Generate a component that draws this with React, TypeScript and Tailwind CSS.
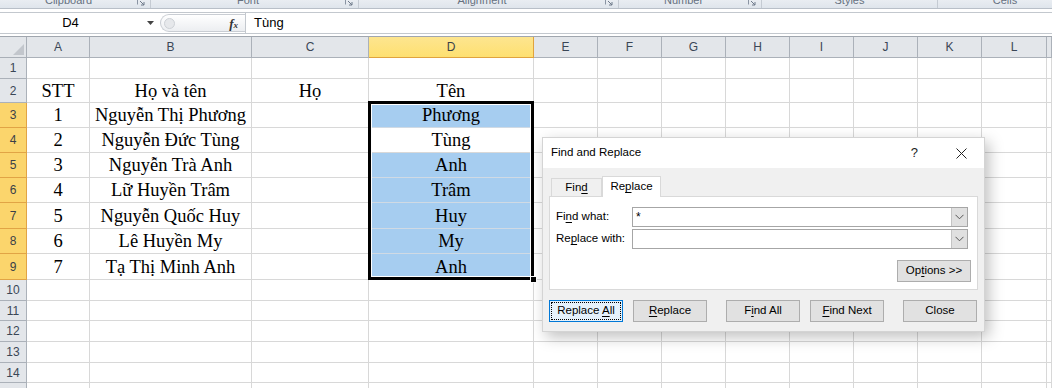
import React from "react";

const rows: Record<number, string[]> = {
  2: ["STT", "Họ và tên", "Họ", "Tên"],
  3: ["1", "Nguyễn Thị Phương", "", "Phương"],
  4: ["2", "Nguyễn Đức Tùng", "", "Tùng"],
  5: ["3", "Nguyễn Trà Anh", "", "Anh"],
  6: ["4", "Lữ Huyền Trâm", "", "Trâm"],
  7: ["5", "Nguyễn Quốc Huy", "", "Huy"],
  8: ["6", "Lê Huyền My", "", "My"],
  9: ["7", "Tạ Thị Minh Anh", "", "Anh"],
};

const letters = ["A", "B", "C", "D", "E", "F", "G", "H", "I", "J", "K", "L", ""];

function Launcher() {
  return (
    <svg width="8" height="8" viewBox="0 0 8 8" className="mr-[5px] mt-[-2px] shrink-0">
      <path d="M0.5 0.5H6.5V0.5M0.5 0.5V6.5" stroke="#8a94a3" fill="none" />
      <path d="M3 3L7 7M7 4V7H4" stroke="#6f7a8a" fill="none" />
    </svg>
  );
}

function RibbonGroup({ label, w, launcher }: { label: string; w: string; launcher?: boolean }) {
  return (
    <div className={`${w} h-full shrink-0 flex items-start border-r border-[#c5cbd3]`}>
      <span className="flex-1 text-center text-[11px] leading-[14px] mt-[-7px] text-[#66717f]">{label}</span>
      {launcher && <Launcher />}
    </div>
  );
}

function Btn({ children, w = "w-[74px]", cls = "" }: { children: React.ReactNode; w?: string; cls?: string }) {
  return (
    <div className={`${w} h-[22px] border border-[#adadad] bg-[#e1e1e1] flex items-center justify-center text-[11.5px] text-black ${cls}`}>
      <span className="whitespace-pre">{children}</span>
    </div>
  );
}

function Chevron() {
  return (
    <svg width="9" height="6" viewBox="0 0 9 6">
      <path d="M0.5 0.8L4.5 4.8L8.5 0.8" stroke="#555" fill="none" strokeWidth="1" />
    </svg>
  );
}

function Combo({ value }: { value?: string }) {
  return (
    <div className="h-[20px] w-[336px] border border-[#a6a6a6] bg-white flex">
      <div className="flex-1 pl-[3px] text-[12px] leading-[18px]">{value}</div>
      <div className="w-[16px] h-full bg-[#e0e0e0] border-l border-[#c4c4c4] flex items-center justify-center">
        <Chevron />
      </div>
    </div>
  );
}

export default function App() {
  const gridCells: React.ReactNode[] = [];
  gridCells.push(
    <div key="corner" className="bg-[#e3e6ea] border-r border-b border-[#a9afb7] flex items-end justify-end pr-[2px] pb-[2px]">
      <svg width="11" height="11" viewBox="0 0 11 11">
        <polygon points="11,0 11,11 0,11" fill="#c2c6cc" />
      </svg>
    </div>
  );
  letters.forEach((l, i) => {
    const sel = l === "D";
    gridCells.push(
      <div
        key={"h" + i}
        className={
          sel
            ? "bg-gradient-to-b from-[#fde58f] to-[#fee070] border-r border-b border-[#e0a33e] flex items-center justify-center text-[12px] text-[#3a3f48]"
            : "bg-[#e3e6ea] border-r border-b border-[#abb1b9] flex items-center justify-center text-[12px] text-[#3a4656]"
        }
      >
        {l}
      </div>
    );
  });

  for (let r = 1; r <= 15; r++) {
    const selRow = r >= 3 && r <= 9;
    gridCells.push(
      <div
        key={"r" + r}
        className={
          selRow
            ? "bg-[#fbd56c] border-r border-b border-[#e1a445] flex items-center justify-center text-[12px] text-[#3a3f48]"
            : "bg-[#e3e6ea] border-r border-b border-[#abb1b9] flex items-center justify-center text-[12px] text-[#3a4656]"
        }
      >
        {r}
      </div>
    );
    const data = rows[r];
    for (let c = 0; c < 13; c++) {
      const text = data && c < 4 ? data[c] : "";
      const blue = c === 3 && selRow && r !== 4;
      gridCells.push(
        <div
          key={`c${r}-${c}`}
          className={
            blue
              ? "bg-[#a6cdf0] border-r border-b border-[#d0dae4] flex items-center justify-center font-['Liberation_Serif',serif] text-[18.5px] leading-[22px] text-black whitespace-nowrap"
              : "bg-white border-r border-b border-[#d8d8d8] flex items-center justify-center font-['Liberation_Serif',serif] text-[18.5px] leading-[22px] text-black whitespace-nowrap"
          }
        >
          {text}
        </div>
      );
    }
  }

  return (
    <div className="w-[1052px] h-[388px] overflow-hidden bg-white relative font-['Liberation_Sans',sans-serif]">
      {/* ribbon group labels strip */}
      <div className="h-[9px] flex overflow-hidden bg-gradient-to-b from-[#e9edf2] to-[#dfe5ec] border-b border-[#b8bfc8]">
        <RibbonGroup label="Clipboard" w="w-[151px]" launcher />
        <RibbonGroup label="Font" w="w-[208px]" launcher />
        <RibbonGroup label="Alignment" w="w-[260px]" launcher />
        <RibbonGroup label="Number" w="w-[143px]" launcher />
        <RibbonGroup label="Styles" w="w-[176px]" />
        <div className="w-[134px] shrink-0 h-full flex items-start">
          <span className="flex-1 text-center text-[11px] leading-[14px] mt-[-7px] text-[#66717f]">Cells</span>
        </div>
      </div>
      <div className="h-[3px] bg-white" />
      {/* formula bar */}
      <div className="h-[22px] flex border-y border-[#c3c8ce] bg-white">
        <div className="w-[157px] flex items-center">
          <span className="flex-1 text-center pr-[6px] text-[13px] text-black">D4</span>
          <svg width="7" height="4" viewBox="0 0 7 4" className="mr-[3px]">
            <polygon points="0,0 7,0 3.5,4" fill="#444" />
          </svg>
        </div>
        <div className="w-[88px] flex items-center">
          <div className="h-[18px] w-[85px] ml-[3px] rounded-l-full border border-r-0 border-[#c9cdd3] bg-gradient-to-b from-white to-[#eceef1] flex items-center">
            <div className="w-[11px] h-[11px] rounded-full border border-[#cdd1d6] bg-[#e6e8eb] ml-[3px]" />
            <span className="ml-auto mr-[7px] font-['Liberation_Serif',serif] italic font-bold text-[13px] text-[#333] leading-none">
              f<span className="text-[9px]">x</span>
            </span>
          </div>
        </div>
        <div className="flex-1 border-l border-[#c3c8ce] flex items-center pl-[8px] text-[13px] text-black">Tùng</div>
      </div>
      <div className="h-[3px] bg-white border-b border-[#a0a6ae]" />
      {/* sheet grid */}
      <div className="relative">
        <div className="grid grid-cols-[27px_63px_162px_117px_165px_64px_64px_64px_64px_64px_64px_64px_65px_1fr] grid-rows-[21px_21px_24px_25px_25px_25px_25px_26px_25px_26px_21px_20px_21px_21px_20px_21px]">
          {gridCells}
        </div>
        {/* selection border D3:D9 */}
        <div className="absolute left-[368px] top-[64px] w-[166px] h-[179px] border-[3px] border-black shadow-[inset_0_0_0_1px_#ffffff]" />
        <div className="absolute left-[530px] top-[239px] w-[7px] h-[7px] bg-black border border-white" />
      </div>

      {/* Find and Replace dialog */}
      <div className="absolute left-[542px] top-[137px] w-[443px] h-[195px] bg-[#f0f0f0] border border-[#d4d4d4] shadow-[4px_5px_14px_rgba(0,0,0,0.25)] flex flex-col text-black">
        <div className="h-[30px] bg-white flex items-center pl-[8px] shrink-0">
          <span className="text-[11.5px]">Find and Replace</span>
          <span className="ml-auto text-[13px] text-[#222]">?</span>
          <svg width="11" height="11" viewBox="0 0 11 11" className="ml-[38px] mr-[17px]">
            <path d="M0.5 0.5L10.5 10.5M10.5 0.5L0.5 10.5" stroke="#222" strokeWidth="1" />
          </svg>
        </div>
        <div className="flex flex-col px-[6px] pt-[8px]">
          <div className="h-[20px] flex items-end pl-[2px]">
            <div className="w-[51px] h-[18px] border border-b-0 border-[#d9d9d9] bg-[#f0f0f0] flex items-center justify-center text-[11.5px]">
              <span>
                Fin<u className="underline-offset-2">d</u>
              </span>
            </div>
            <div className="w-[59px] h-[21px] border border-b-0 border-[#d9d9d9] bg-white flex items-center justify-center text-[11.5px] mb-[-1px] relative z-10">
              <span>
                Re<u className="underline-offset-2">p</u>lace
              </span>
            </div>
          </div>
          <div className="h-[94px] bg-white border border-[#d9d9d9] flex flex-col pt-[10px]">
            <div className="grid grid-cols-[76px_336px] gap-y-[2px] pl-[6px] items-center">
              <span className="text-[11.5px]">
                Fi<u className="underline-offset-2">n</u>d what:
              </span>
              <Combo value="*" />
              <span className="text-[11.5px]">
                Re<u className="underline-offset-2">p</u>lace with:
              </span>
              <Combo />
            </div>
            <div className="self-end mr-[6px] mt-[11px]">
              <Btn>
                Op<u className="underline-offset-2">t</u>ions &gt;&gt;
              </Btn>
            </div>
          </div>
          <div className="flex mt-[10px]">
            <div className="w-[74px] h-[22px] border border-[#0078d7] bg-[#e5f1fb] p-[1px] flex">
              <div className="flex-1 border border-dotted border-black flex items-center justify-center text-[11.5px]">
                <span className="whitespace-pre">
                  Replace <u className="underline-offset-2">A</u>ll
                </span>
              </div>
            </div>
            <Btn cls="ml-[10px]">
              <u className="underline-offset-2">R</u>eplace
            </Btn>
            <Btn cls="ml-[19px]">
              F<u className="underline-offset-2">i</u>nd All
            </Btn>
            <Btn cls="ml-[10px]">
              <u className="underline-offset-2">F</u>ind Next
            </Btn>
            <Btn cls="ml-[19px]">Close</Btn>
          </div>
        </div>
      </div>
    </div>
  );
}
